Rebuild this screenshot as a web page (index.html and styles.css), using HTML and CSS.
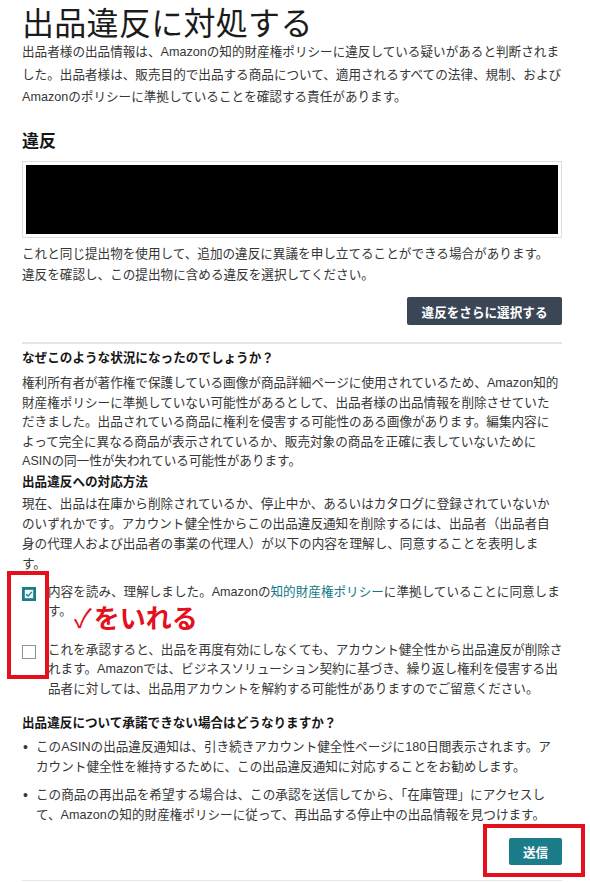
FILE: index.html
```html
<!DOCTYPE html>
<html lang="ja">
<head>
    <meta charset="UTF-8">
    <meta name="viewport" content="width=device-width, initial-scale=1.0">
    <title>出品違反に対処する</title>
    <link rel="stylesheet" href="styles.css">
</head>
<body>
<div class="page">
    <h1 class="title">出品違反に対処する</h1>
    <p class="lead">出品者様の出品情報は、Amazonの知的財産権ポリシーに違反している疑いがあると判断されま<br>した。出品者様は、販売目的で出品する商品について、適用されるすべての法律、規制、および<br>Amazonのポリシーに準拠していることを確認する責任があります。</p>

    <h2 class="section-title">違反</h2>
    <div class="violation-box">
        <div class="redacted"></div>
    </div>
    <p class="note">これと同じ提出物を使用して、追加の違反に異議を申し立てることができる場合があります。<br>違反を確認し、この提出物に含める違反を選択してください。</p>
    <div class="actions">
        <button class="btn btn-dark">違反をさらに選択する</button>
    </div>

    <hr class="divider">

    <h3>なぜこのような状況になったのでしょうか？</h3>
    <p class="body">権利所有者が著作権で保護している画像が商品詳細ページに使用されているため、Amazon知的<br>財産権ポリシーに準拠していない可能性があるとして、出品者様の出品情報を削除させていた<br>だきました。出品されている商品に権利を侵害する可能性のある画像があります。編集内容に<br>よって完全に異なる商品が表示されているか、販売対象の商品を正確に表していないために<br>ASINの同一性が失われている可能性があります。</p>

    <h3 class="tight">出品違反への対応方法</h3>
    <p class="body short">現在、出品は在庫から削除されているか、停止中か、あるいはカタログに登録されていないか<br>のいずれかです。アカウント健全性からこの出品違反通知を削除するには、出品者（出品者自<br>身の代理人および出品者の事業の代理人）が以下の内容を理解し、同意することを表明しま<br>す。</p>

    <div class="checks">
        <span class="mark mark-checks"></span>
        <label class="check">
            <span class="box">
                <svg width="14" height="14" viewBox="0 0 14 14">
                    <rect x="0" y="0" width="14" height="14" fill="#1c7d8a"/>
                    <rect x="2.5" y="2.5" width="9" height="9" fill="#eef6f7" stroke="#1c7d8a" stroke-width="0.6"/>
                    <path d="M4.2 7.2 L6.1 9.1 L9.9 4.9" fill="none" stroke="#1c7d8a" stroke-width="1.4"/>
                </svg>
            </span>
            <span class="check-text">内容を読み、理解しました。Amazonの<a href="#">知的財産権ポリシー</a>に準拠していることに同意しま<br>す。</span>
            <span class="annot"><span class="tick">✓</span>をいれる</span>
        </label>
        <label class="check">
            <span class="box empty"></span>
            <span class="check-text">これを承認すると、出品を再度有効にしなくても、アカウント健全性から出品違反が削除さ<br>れます。Amazonでは、ビジネスソリューション契約に基づき、繰り返し権利を侵害する出<br>品者に対しては、出品用アカウントを解約する可能性がありますのでご留意ください。</span>
        </label>
    </div>

    <h3 class="spaced">出品違反について承諾できない場合はどうなりますか？</h3>
    <ul class="bullets">
        <li>このASINの出品違反通知は、引き続きアカウント健全性ページに180日間表示されます。ア<br>カウント健全性を維持するために、この出品違反通知に対応することをお勧めします。</li>
        <li>この商品の再出品を希望する場合は、この承認を送信してから、「在庫管理」にアクセスし<br>て、Amazonの知的財産権ポリシーに従って、再出品する停止中の出品情報を見つけます。</li>
    </ul>

    <div class="actions submit">
        <div class="submit-wrap">
            <button class="btn btn-teal">送信</button>
            <span class="mark mark-submit"></span>
        </div>
    </div>

    <hr class="divider bottom">
</div>
</body>
</html>
```

FILE: styles.css
```css
body {
    margin: 0;
    background: #fff;
    font-family: "Liberation Sans", "Noto Sans CJK JP", sans-serif;
    color: #363636;
}
.page {
    width: 540px;
    padding: 7px 28px 0 22px;
}
.title {
    margin: 0;
    font-size: 32px;
    line-height: 34px;
    font-weight: 400;
    letter-spacing: 0.3px;
    color: #1b1b1b;
}
p {
    margin: 0;
    font-size: 12.6px;
    white-space: nowrap;
}
.lead {
    line-height: 22.5px;
}
.section-title {
    margin: 21px 0 0;
    font-size: 17px;
    line-height: 24px;
    font-weight: 700;
    color: #161616;
}
.violation-box {
    margin-top: 7.5px;
    border: 1px solid #dedede;
    padding: 3px;
}
.redacted {
    height: 69px;
    background: #000;
}
.note {
    margin-top: 6px;
    line-height: 21px;
}
.actions {
    display: flex;
    justify-content: flex-end;
    margin-top: 11px;
}
.btn {
    border: none;
    border-radius: 2px;
    color: #fff;
    font-family: inherit;
    font-size: 12.6px;
    font-weight: 700;
    cursor: pointer;
}
.btn-dark {
    height: 28px;
    width: 155px;
    background: #3a4656;
}
.btn-teal {
    height: 27px;
    width: 53px;
    background: #1c7d8a;
}
.divider {
    margin: 17px 0 0;
    border: none;
    border-top: 2px solid #e6e6e6;
}
.divider.bottom {
    margin-top: 15px;
    border-top-width: 1px;
}
h3 {
    margin: 4px 0 0;
    font-size: 12.6px;
    line-height: 20px;
    font-weight: 700;
    color: #161616;
}
h3.tight {
    margin-top: 0;
}
h3.spaced {
    margin-top: 13.5px;
}
.body {
    margin-top: 6px;
    line-height: 19.5px;
}
.body.short {
    margin-top: 2px;
    line-height: 20px;
}
.checks {
    position: relative;
    margin-top: 9px;
}
.check {
    position: relative;
    display: flex;
    gap: 12px;
    font-size: 12.6px;
    line-height: 19.5px;
}
.check + .check {
    margin-top: 19px;
}
.box {
    flex: none;
    width: 14px;
    height: 14px;
    margin-top: 4px;
}
.box svg {
    display: block;
}
.box.empty {
    box-sizing: border-box;
    border: 1px solid #8e9196;
    background: #fff;
}
.check-text {
    white-space: nowrap;
}
.check-text a {
    color: #137886;
    text-decoration: none;
}
.annot {
    position: absolute;
    left: 52px;
    top: 21px;
    font-family: "Noto Sans CJK JP", sans-serif;
    font-size: 26px;
    line-height: 26px;
    font-weight: 700;
    color: #e5101c;
    white-space: nowrap;
}
.annot .tick {
    font-weight: 400;
    margin-right: 2px;
}
.mark {
    position: absolute;
    border: 4px solid #e5101c;
    box-sizing: border-box;
}
.mark-checks {
    left: -15px;
    top: -12px;
    width: 42px;
    height: 108px;
}
.bullets {
    list-style: none;
    margin: 5.5px 0 0;
    padding: 0;
    font-size: 12.6px;
    line-height: 19.5px;
}
.bullets li {
    position: relative;
    padding-left: 14px;
    white-space: nowrap;
}
.bullets li + li {
    margin-top: 9px;
}
.bullets li::before {
    content: "•";
    position: absolute;
    left: 1px;
    top: 0;
    font-size: 14px;
}
.submit {
    margin-top: 12.5px;
}
.submit-wrap {
    position: relative;
    display: flex;
}
.mark-submit {
    top: -14px;
    right: -23px;
    bottom: -12px;
    left: -26px;
}
```
